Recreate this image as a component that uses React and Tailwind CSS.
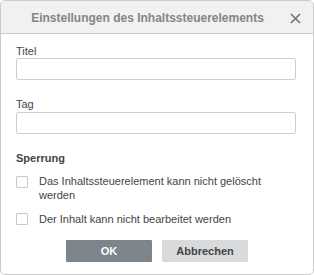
import React from "react";

export default function App() {
  return (
    <div
      className="w-[314px] h-[275px] bg-white border border-[#cbcbcb] rounded-[5px] overflow-hidden flex flex-col text-[11px] text-[#444444]"
      style={{ fontFamily: '"Liberation Sans", Arial, sans-serif' }}
    >
      <div className="relative h-[33px] shrink-0 bg-[#f1f1f1] border-b border-[#cbcbcb] flex items-center justify-center pr-[19px]">
        <span className="text-[12px] font-bold text-[#858585] leading-[14px] pt-[1px]">
          Einstellungen des Inhaltssteuerelements
        </span>
        <button className="absolute right-[12px] top-[11px] w-[12px] h-[12px] flex items-center justify-center">
          <svg width="11" height="11" viewBox="0 0 11 11">
            <path d="M1 1L10 10M10 1L1 10" stroke="#717171" strokeWidth="1.6" />
          </svg>
        </button>
      </div>

      <div className="flex flex-col px-[15px] pt-[10px]">
        <label className="leading-[14px] h-[14px]">Titel</label>
        <input className="h-[22px] w-[280px] border border-[#cfcfcf] rounded-[2px] bg-white outline-none" />

        <label className="mt-[17px] leading-[14px] h-[14px]">Tag</label>
        <input className="mt-[1px] h-[22px] w-[280px] border border-[#cfcfcf] rounded-[2px] bg-white outline-none" />

        <div className="mt-[17px] leading-[14px] h-[14px] font-bold">Sperrung</div>

        <div className="mt-[9px] flex items-start">
          <span className="mt-[2px] w-[12px] h-[12px] shrink-0 border border-[#c8c8c8] rounded-[1px] bg-white" />
          <span className="ml-[11px] leading-[14px] w-[240px]">
            Das Inhaltssteuerelement kann nicht gelöscht werden
          </span>
        </div>

        <div className="mt-[10px] flex items-start">
          <span className="mt-[1px] w-[12px] h-[12px] shrink-0 border border-[#c8c8c8] rounded-[1px] bg-white" />
          <span className="ml-[11px] leading-[14px]">Der Inhalt kann nicht bearbeitet werden</span>
        </div>

        <div className="mt-[14px] flex justify-center gap-[10px]">
          <button className="w-[86px] h-[22px] bg-[#7d858c] text-white font-bold text-[11px] rounded-[1px]">
            OK
          </button>
          <button className="w-[86px] h-[22px] bg-[#d8dadc] text-[#444444] font-bold text-[11px] rounded-[1px]">
            Abbrechen
          </button>
        </div>
      </div>
    </div>
  );
}
